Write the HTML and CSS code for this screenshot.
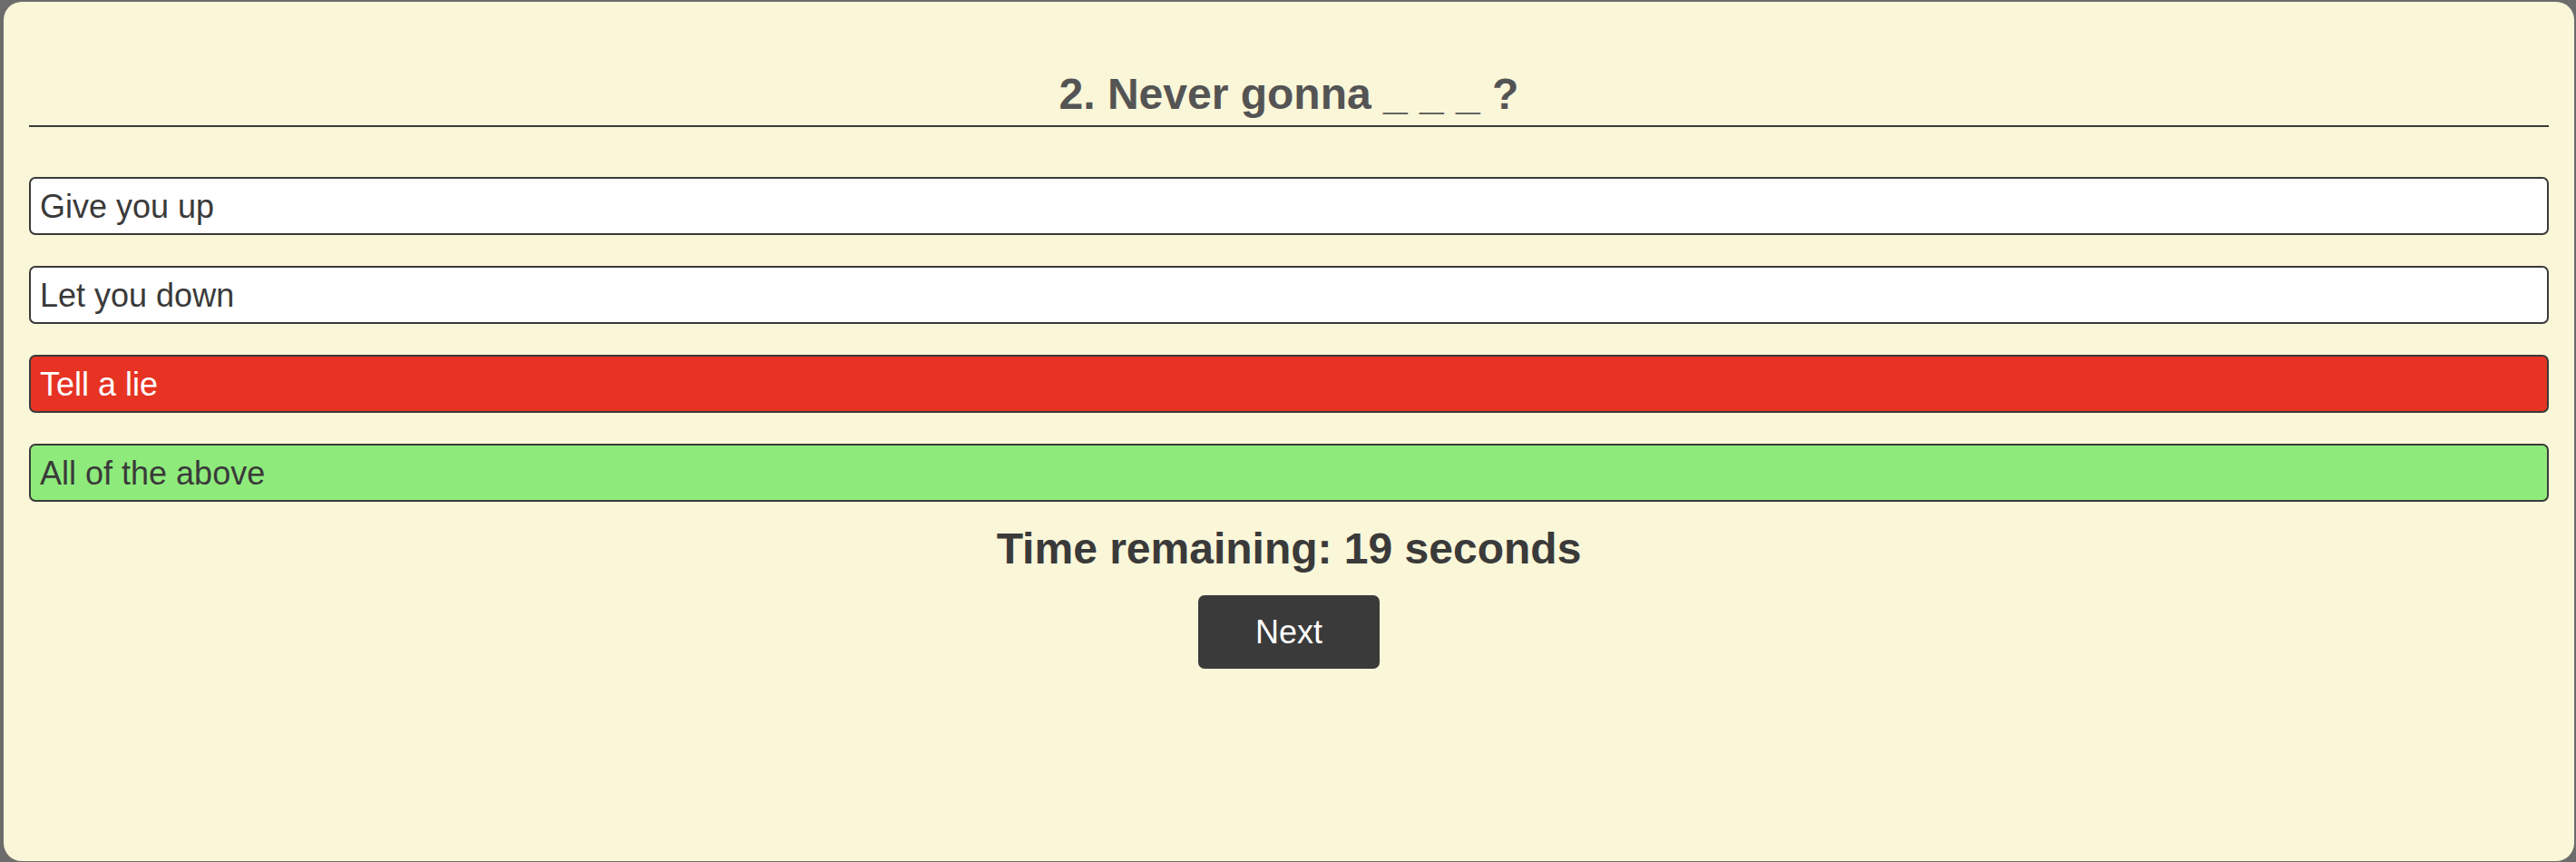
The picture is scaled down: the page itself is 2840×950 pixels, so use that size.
FILE: index.html
```html
<!DOCTYPE html>
<html lang="en">
<head>
<meta charset="utf-8">
<title>Quiz</title>
<link rel="stylesheet" href="styles.css">
</head>
<body>
<main class="card">
  <h2 class="question">2. Never gonna _ _ _ ?</h2>
  <ul class="options">
    <li class="option">Give you up</li>
    <li class="option">Let you down</li>
    <li class="option option-wrong">Tell a lie</li>
    <li class="option option-right">All of the above</li>
  </ul>
  <div class="footer">
    <p class="timer">Time remaining: 19 seconds</p>
    <button class="next-btn" type="button">Next</button>
  </div>
</main>
</body>
</html>
```
FILE: styles.css
```css
html, body {
  margin: 0;
  padding: 0;
  height: 100%;
}

body {
  background: #6c6c6c;
  font-family: "Liberation Sans", Arial, sans-serif;
  color: #3a3a3a;
}

.card {
  box-sizing: border-box;
  height: 947px;
  margin: 2px 2px 1px 4px;
  padding: 0 28px;
  background: #faf6d8;
  border-radius: 20px;
  display: flex;
  flex-direction: column;
}

.question {
  margin: 74px 0 0;
  padding: 0 0 6px;
  border-bottom: 2px solid #3a3a3a;
  text-align: center;
  font-family: "Liberation Sans", Arial, sans-serif;
  font-weight: 700;
  font-size: 48px;
  line-height: 56px;
  color: #545454;
}

.options {
  list-style: none;
  margin: 55px 0 0;
  padding: 0;
  display: flex;
  flex-direction: column;
  gap: 34px;
}

.option {
  border: 2px solid #3a3a3a;
  border-radius: 7px;
  background: #ffffff;
  padding: 11px 10px 9px;
  font-size: 36px;
  line-height: 40px;
  color: #3a3a3a;
}

.option-wrong {
  background: #e63323;
  color: #ffffff;
}

.option-right {
  background: #8eeb7b;
  color: #3a3a3a;
}

.footer {
  display: flex;
  flex-direction: column;
  align-items: center;
}

.timer {
  margin: 24px 0 0;
  font-family: "Liberation Sans", Arial, sans-serif;
  font-weight: 700;
  font-size: 48px;
  line-height: 56px;
  color: #3a3a3a;
}

.next-btn {
  margin-top: 23px;
  width: 200px;
  height: 81px;
  border: none;
  border-radius: 7px;
  background: #3a3a3a;
  color: #ffffff;
  font-family: "Liberation Sans", Arial, sans-serif;
  font-size: 36px;
  padding: 0;
}
```
